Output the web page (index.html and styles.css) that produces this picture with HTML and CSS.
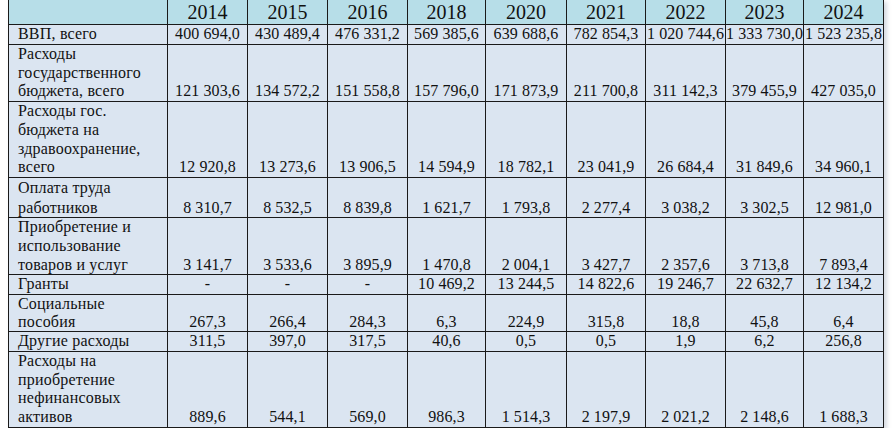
FILE: index.html
```html
<!DOCTYPE html>
<html lang="ru">
<head>
<meta charset="utf-8">
<link rel="stylesheet" href="styles.css">
</head>
<body>
<table class="data">
<colgroup>
<col class="c-label"><col class="c80"><col class="c80"><col class="c80"><col class="c78"><col class="c81"><col class="c79"><col class="c80"><col class="c78"><col class="c80">
</colgroup>
<thead>
<tr class="head"><th></th><th>2014</th><th>2015</th><th>2016</th><th>2018</th><th>2020</th><th>2021</th><th>2022</th><th>2023</th><th>2024</th></tr>
</thead>
<tbody>
<tr><td class="lbl">ВВП, всего</td><td>400 694,0</td><td>430 489,4</td><td>476 331,2</td><td>569 385,6</td><td>639 688,6</td><td>782 854,3</td><td>1 020 744,6</td><td>1 333 730,0</td><td>1 523 235,8</td></tr>
<tr><td class="lbl">Расходы<br>государственного<br>бюджета, всего</td><td>121 303,6</td><td>134 572,2</td><td>151 558,8</td><td>157 796,0</td><td>171 873,9</td><td>211 700,8</td><td>311 142,3</td><td>379 455,9</td><td>427 035,0</td></tr>
<tr><td class="lbl">Расходы гос.<br>бюджета на<br>здравоохранение,<br>всего</td><td>12 920,8</td><td>13 273,6</td><td>13 906,5</td><td>14 594,9</td><td>18 782,1</td><td>23 041,9</td><td>26 684,4</td><td>31 849,6</td><td>34 960,1</td></tr>
<tr class="two"><td class="lbl">Оплата труда<br>работников</td><td>8 310,7</td><td>8 532,5</td><td>8 839,8</td><td>1 621,7</td><td>1 793,8</td><td>2 277,4</td><td>3 038,2</td><td>3 302,5</td><td>12 981,0</td></tr>
<tr><td class="lbl">Приобретение и<br>использование<br>товаров и услуг</td><td>3 141,7</td><td>3 533,6</td><td>3 895,9</td><td>1 470,8</td><td>2 004,1</td><td>3 427,7</td><td>2 357,6</td><td>3 713,8</td><td>7 893,4</td></tr>
<tr><td class="lbl">Гранты</td><td>-</td><td>-</td><td>-</td><td>10 469,2</td><td>13 244,5</td><td>14 822,6</td><td>19 246,7</td><td>22 632,7</td><td>12 134,2</td></tr>
<tr class="tight"><td class="lbl">Социальные<br>пособия</td><td>267,3</td><td>266,4</td><td>284,3</td><td>6,3</td><td>224,9</td><td>315,8</td><td>18,8</td><td>45,8</td><td>6,4</td></tr>
<tr><td class="lbl">Другие расходы</td><td>311,5</td><td>397,0</td><td>317,5</td><td>40,6</td><td>0,5</td><td>0,5</td><td>1,9</td><td>6,2</td><td>256,8</td></tr>
<tr><td class="lbl">Расходы на<br>приобретение<br>нефинансовых<br>активов</td><td>889,6</td><td>544,1</td><td>569,0</td><td>986,3</td><td>1 514,3</td><td>2 197,9</td><td>2 021,2</td><td>2 148,6</td><td>1 688,3</td></tr>
</tbody>
</table>
</body>
</html>
```

FILE: styles.css
```css
html, body {
  margin: 0;
  padding: 0;
  background: #ffffff;
}
body {
  padding-left: 8px;
  font-family: "Liberation Serif", "Times New Roman", serif;
  color: #000;
}
.data {
  border-collapse: collapse;
  table-layout: fixed;
  width: 876px;
  margin-top: -1px;
  font-family: "Liberation Serif", "Times New Roman", serif;
  box-shadow: 3px 3px 4px rgba(90, 110, 140, 0.25);
}
.c-label { width: 159px; }
.c78 { width: 78px; }
.c79 { width: 79px; }
.c80 { width: 80px; }
.c81 { width: 81px; }
.data th, .data td {
  border: 1px solid #1a1a1a;
  padding: 0;
  white-space: nowrap;
  overflow: visible;
}
.head th {
  background: #b7dee8;
  font-size: 20px;
  font-weight: normal;
  line-height: 24px;
  height: 24px;
  text-align: center;
  vertical-align: middle;
  color: #111;
}
.data td {
  background: #dbe5f1;
  font-size: 16px;
  line-height: 18.75px;
  text-align: center;
  vertical-align: bottom;
  letter-spacing: 0.1px;
  color: #111;
}
.data td.lbl {
  text-align: left;
  vertical-align: top;
  padding-left: 9px;
  letter-spacing: 0.2px;
}
.two td { line-height: 19.5px; }
.tight td { line-height: 18px; }
```
